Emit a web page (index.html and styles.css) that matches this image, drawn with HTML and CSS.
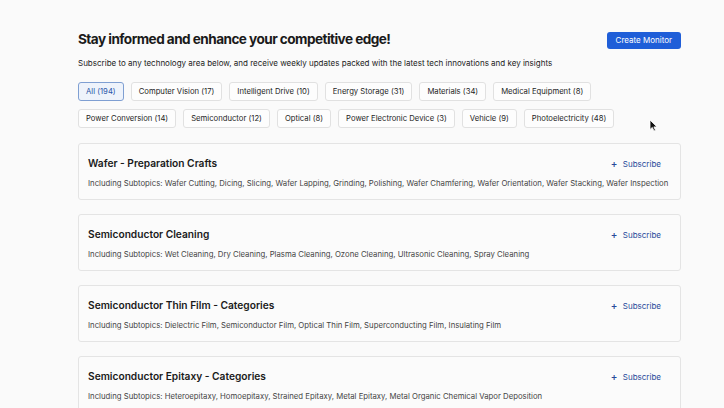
FILE: index.html
```html
<!DOCTYPE html>
<html>
<head>
  <title>Technology Monitors</title>
  <link rel="stylesheet" href="styles.css">
</head>
<body>
  <div class="page">
    <div class="header">
      <h1>Stay informed and enhance your competitive edge!</h1>
      <button class="create-btn">Create Monitor</button>
    </div>
    <p class="intro">Subscribe to any technology area below, and receive weekly updates packed with the latest tech innovations and key insights</p>

    <div class="chips">
      <span class="chip active">All (194)</span>
      <span class="chip">Computer Vision (17)</span>
      <span class="chip">Intelligent Drive (10)</span>
      <span class="chip">Energy Storage (31)</span>
      <span class="chip">Materials (34)</span>
      <span class="chip">Medical Equipment (8)</span>
      <span class="chip">Power Conversion (14)</span>
      <span class="chip">Semiconductor (12)</span>
      <span class="chip">Optical (8)</span>
      <span class="chip">Power Electronic Device (3)</span>
      <span class="chip">Vehicle (9)</span>
      <span class="chip">Photoelectricity (48)</span>
    </div>

    <div class="cards">
      <div class="card">
        <div class="card-top">
          <h2>Wafer - Preparation Crafts</h2>
          <a class="subscribe" href="#"><span class="plus">+</span> Subscribe</a>
        </div>
        <p class="subtopics">Including Subtopics: Wafer Cutting, Dicing, Slicing, Wafer Lapping, Grinding, Polishing, Wafer Chamfering, Wafer Orientation, Wafer Stacking, Wafer Inspection</p>
      </div>
      <div class="card">
        <div class="card-top">
          <h2>Semiconductor Cleaning</h2>
          <a class="subscribe" href="#"><span class="plus">+</span> Subscribe</a>
        </div>
        <p class="subtopics">Including Subtopics: Wet Cleaning, Dry Cleaning, Plasma Cleaning, Ozone Cleaning, Ultrasonic Cleaning, Spray Cleaning</p>
      </div>
      <div class="card">
        <div class="card-top">
          <h2>Semiconductor Thin Film - Categories</h2>
          <a class="subscribe" href="#"><span class="plus">+</span> Subscribe</a>
        </div>
        <p class="subtopics">Including Subtopics: Dielectric Film, Semiconductor Film, Optical Thin Film, Superconducting Film, Insulating Film</p>
      </div>
      <div class="card">
        <div class="card-top">
          <h2>Semiconductor Epitaxy - Categories</h2>
          <a class="subscribe" href="#"><span class="plus">+</span> Subscribe</a>
        </div>
        <p class="subtopics">Including Subtopics: Heteroepitaxy, Homoepitaxy, Strained Epitaxy, Metal Epitaxy, Metal Organic Chemical Vapor Deposition</p>
      </div>
    </div>
  </div>

  <svg class="cursor" width="9" height="13" viewBox="0 0 9 13">
    <path d="M1 1 L1 10.5 L3.3 8.4 L5 12 L6.5 11.3 L4.9 7.9 L8 7.9 Z" fill="#111" stroke="#fff" stroke-width="0.8"/>
  </svg>
</body>
</html>
```

FILE: styles.css
```css
html, body {
  margin: 0;
  background: #fafafa;
  font-family: Inter, "Noto Sans", sans-serif;
  color: #1a1a1a;
}

.page {
  width: 603px;
  margin-left: 78px;
  padding-top: 30px;
}

.header {
  display: flex;
  justify-content: space-between;
  align-items: center;
}
.header h1 {
  margin: 0;
  font-size: 13.6px;
  line-height: 19px;
  font-weight: 700;
  letter-spacing: -0.55px;
}
.create-btn {
  height: 17px;
  margin-top: 1px;
  padding: 0 9px;
  border: none;
  border-radius: 3px;
  background: #1f5ed8;
  color: #fff;
  font-family: inherit;
  font-size: 8px;
  cursor: pointer;
}

.intro {
  margin: 9px 0 0;
  font-size: 8px;
  line-height: 11px;
  color: #222;
}

.chips {
  display: flex;
  flex-wrap: wrap;
  gap: 8px 7px;
  margin-top: 13px;
}
.chip {
  display: inline-block;
  height: 17px;
  line-height: 17px;
  padding: 0 7px;
  border: 1px solid #e1e1e1;
  border-radius: 3px;
  background: #fdfdfd;
  font-size: 7.7px;
  color: #1e1e1e;
}
.chip.active {
  background: #eef3fb;
  border-color: #7f9fd2;
  color: #2a55a8;
}

.cards {
  display: flex;
  flex-direction: column;
  gap: 14px;
  margin-top: 15px;
}
.card {
  height: 57px;
  box-sizing: border-box;
  padding: 13px 8px 0 9px;
  border: 1px solid #e4e4e4;
  border-radius: 3px;
  background: #fbfbfb;
}
.card-top {
  display: flex;
  justify-content: space-between;
  align-items: center;
}
.card h2 {
  margin: 0;
  font-size: 10.2px;
  font-weight: 600;
}
.subscribe {
  margin-right: 11px;
  font-size: 8px;
  color: #274a9a;
  text-decoration: none;
}
.subscribe .plus {
  font-size: 10px;
  font-weight: 500;
  margin-right: 3px;
}
.subtopics {
  margin: 9px 0 0;
  font-size: 7.75px;
  white-space: nowrap;
  color: #444;
}

.cursor {
  position: absolute;
  left: 649px;
  top: 119px;
}
```
